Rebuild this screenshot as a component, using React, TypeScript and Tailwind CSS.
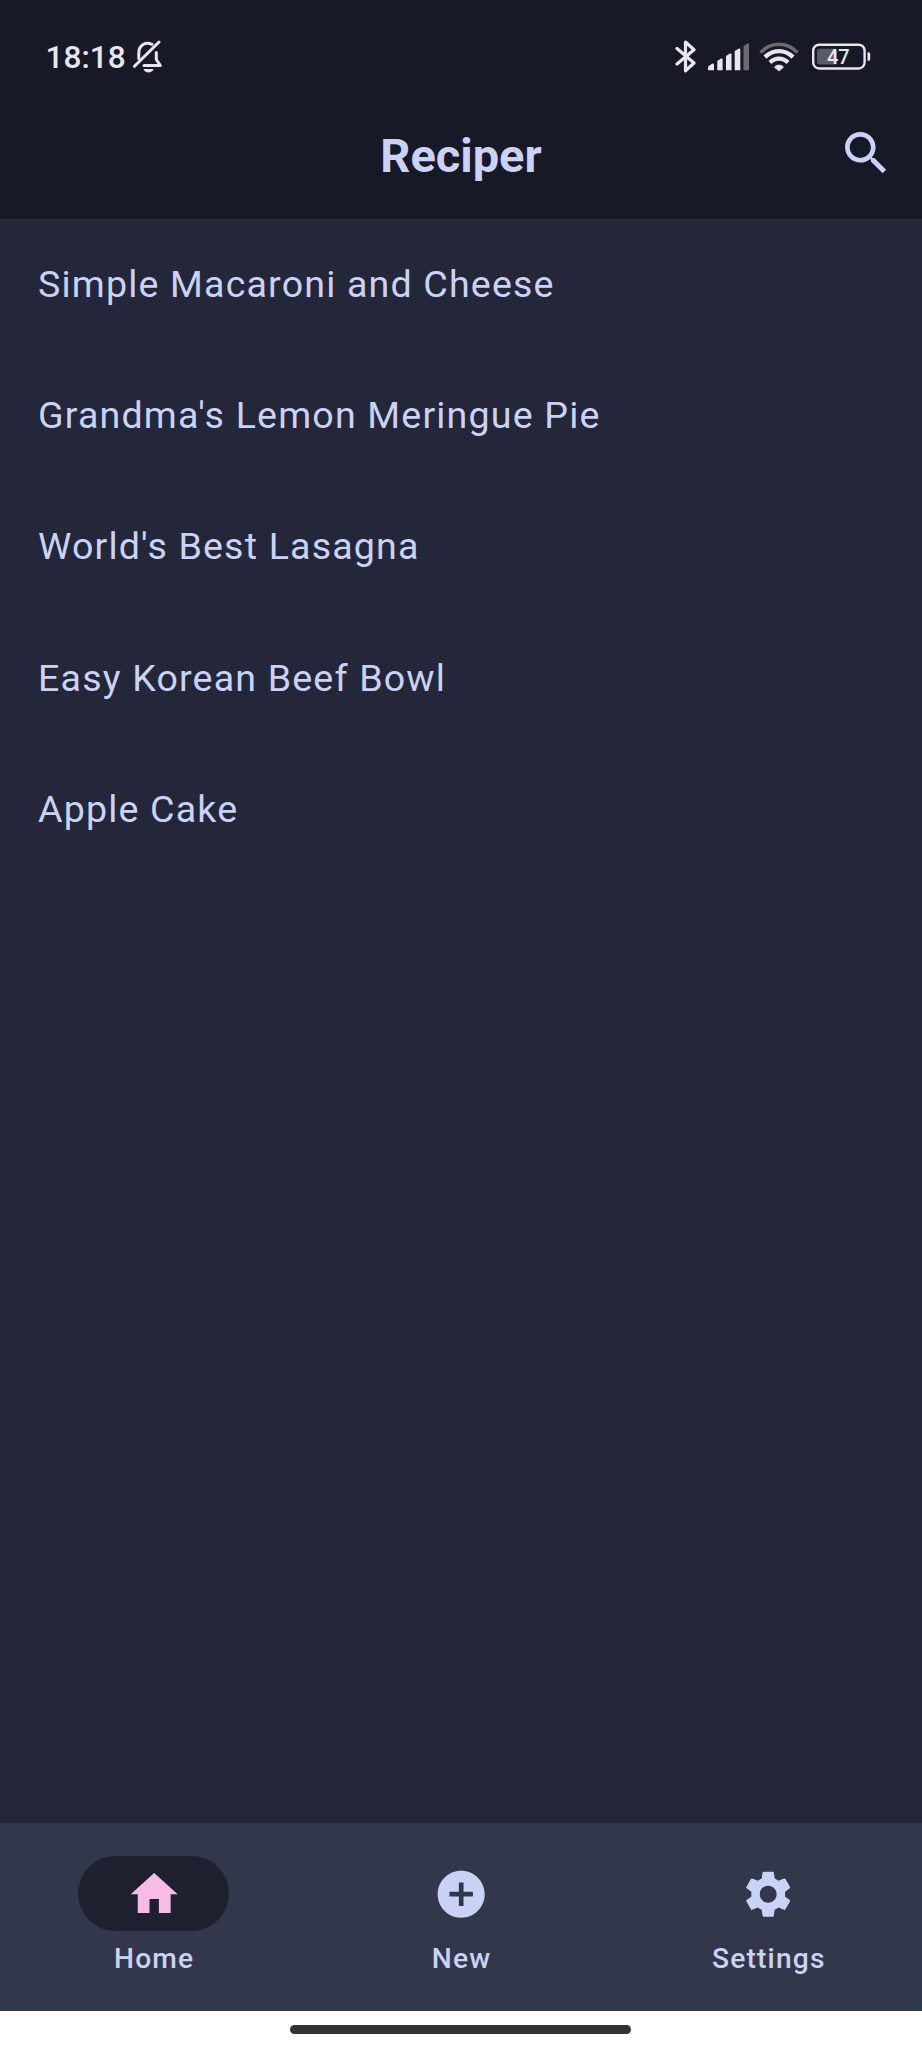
import React from 'react';

const recipes = [
  'Simple Macaroni and Cheese',
  "Grandma's Lemon Meringue Pie",
  "World's Best Lasagna",
  'Easy Korean Beef Bowl',
  'Apple Cake',
];

const iconPaths = {
  search:
    'M15.5 14h-.79l-.28-.27C15.41 12.59 16 11.11 16 9.5 16 5.91 13.09 3 9.5 3S3 5.91 3 9.5 5.91 16 9.5 16c1.61 0 3.09-.59 4.23-1.57l.27.28v.79l5 4.99L20.49 19l-4.99-5zm-6 0C7.01 14 5 11.99 5 9.5S7.01 5 9.5 5 14 7.01 14 9.5 11.99 14 9.5 14z',
  home: 'M10 20v-6h4v6h5v-8h3L12 3 2 12h3v8z',
  add: 'M12 2C6.48 2 2 6.48 2 12s4.48 10 10 10 10-4.48 10-10S17.52 2 12 2zm5 11h-4v4h-2v-4H7v-2h4V7h2v4h4v2z',
  settings:
    'M19.14 12.94c.04-.3.06-.61.06-.94 0-.32-.02-.64-.07-.94l2.03-1.58c.18-.14.23-.41.12-.61l-1.92-3.32c-.12-.22-.37-.29-.59-.22l-2.39.96c-.5-.38-1.03-.7-1.62-.94l-.36-2.54c-.04-.24-.24-.41-.48-.41h-3.84c-.24 0-.43.17-.47.41l-.36 2.54c-.59.24-1.13.57-1.62.94l-2.39-.96c-.22-.08-.47 0-.59.22L2.74 8.87c-.12.21-.08.47.12.61l2.03 1.58c-.05.3-.09.63-.09.94s.02.64.07.94l-2.03 1.58c-.18.14-.23.41-.12.61l1.92 3.32c.12.22.37.29.59.22l2.39-.96c.5.38 1.03.7 1.62.94l.36 2.54c.05.24.24.41.48.41h3.84c.24 0 .44-.17.47-.41l.36-2.54c.59-.24 1.13-.56 1.62-.94l2.39.96c.22.08.47 0 .59-.22l1.92-3.32c.12-.22.07-.47-.12-.61l-2.01-1.58zM12 15.6c-1.98 0-3.6-1.62-3.6-3.6s1.62-3.6 3.6-3.6 3.6 1.62 3.6 3.6-1.62 3.6-3.6 3.6z',
};

function Icon({ name, className = '' }: { name: keyof typeof iconPaths; className?: string }) {
  return (
    <svg viewBox="0 0 24 24" fill="currentColor" className={`size-[56.4px] shrink-0 ${className}`}>
      <path d={iconPaths[name]} />
    </svg>
  );
}

function StatusBar() {
  return (
    <div className="flex h-[112px] items-center justify-between pl-[45.5px] pr-[50px] text-[#e6e7ee]">
      <div className="flex items-center gap-[6px] pt-[4px]">
        <span className="text-[31.6px] font-medium leading-9">18:18</span>
        <svg width="32" height="36" viewBox="0 0 32 36" fill="none" stroke="currentColor" strokeWidth="3" strokeLinecap="round" strokeLinejoin="round">
          <path d="M20 4.3C12 1 6.8 6.5 6.8 13V18.5" />
          <path d="M24.3 12.5V19.5L28.3 25.5H12" />
          <path d="M2.5 26.3 27 2" />
          <path d="M11.5 29H21.5C20.5 33.5 12.5 33.5 11.5 29Z" fill="currentColor" stroke="none" />
        </svg>
      </div>
      <div className="flex items-center pt-[1px]">
        <svg width="24" height="36" viewBox="0 0 24 36" fill="none" stroke="currentColor" strokeWidth="3.2" strokeLinejoin="round" strokeLinecap="round">
          <path d="M2 9.5 19 24 10.5 31.8V3L19 10.8 2 25" />
        </svg>
        <svg className="ml-[9px]" width="42" height="36" viewBox="0 0 42 36" fill="currentColor">
          <path d="M0 31.3V28.5Q0 27 1.5 26.5L4 24.7Q6 24 6 26V31.3Z" />
          <path d="M9.3 31.3V22L13 19.5Q14.6 19 14.6 20.5V31.3Z" />
          <path d="M18 31.3V17L22 14.5Q23.5 14 23.5 15.5V31.3Z" />
          <path d="M26.7 31.3V12L31 9.5Q32.3 9 32.3 10.5V31.3Z" />
          <path d="M35.5 31.3V7L39.5 4.5Q41 4 41 5.5V31.3Z" opacity="0.4" />
        </svg>
        <svg className="ml-[9px]" width="40" height="36" viewBox="0 0 40 36" fill="none" stroke="currentColor" strokeWidth="3.5">
          <path d="M1.5 13.6C12 2.6 28 2.6 38.5 13.6" opacity="0.4" />
          <path d="M6 18.1C14 10.1 26 10.1 34 18.1" strokeWidth="4.4" />
          <path d="M11 23.6C16.2 18.4 23.8 18.4 29 23.6" strokeWidth="4.2" />
          <path d="M15.5 28.2C17.5 25.4 22.5 25.4 24.5 28.2L20 32Z" fill="currentColor" strokeWidth="0.8" strokeLinejoin="round" />
        </svg>
        <svg className="ml-[13px]" width="60" height="36" viewBox="0 0 60 36">
          <rect x="1.2" y="5.7" width="51.4" height="23.8" rx="6" fill="none" stroke="currentColor" strokeWidth="2.4" />
          <rect x="5" y="9.8" width="20" height="15.6" rx="2.5" fill="#5a5b67" />
          <path d="M55.5 13.3h1.2a1.5 1.5 0 0 1 1.5 1.5v5.5a1.5 1.5 0 0 1-1.5 1.5h-1.2Z" fill="currentColor" />
          <text x="26.3" y="25" textAnchor="middle" fill="currentColor" fontSize="20" fontWeight="500">47</text>
        </svg>
      </div>
    </div>
  );
}

function NavItem({ icon, label, active = false }: { icon: keyof typeof iconPaths; label: string; active?: boolean }) {
  return (
    <button className="flex flex-1 flex-col items-center pt-[33px]">
      <span
        className={`flex h-[75px] w-[150.5px] items-center justify-center rounded-full pt-[0.5px] pl-[0.5px] ${
          active ? 'bg-[#1e2030] text-[#f5bde6]' : 'text-[#cad3f5]'
        }`}
      >
        <Icon name={icon} />
      </span>
      <span className="mt-[9.4px] pl-[1px] text-[28.2px] font-medium leading-[38px] tracking-[1.17px]">{label}</span>
    </button>
  );
}

export default function App() {
  return (
    <div className="flex h-[2048px] w-[922px] flex-col overflow-hidden bg-[#24273a] font-[Roboto,sans-serif] text-[#cad3f5]">
      <header className="h-[219px] shrink-0 bg-[#181926]">
        <StatusBar />
        <div className="grid grid-cols-[1fr_auto_1fr] items-center pr-[28px] pl-[28px]">
          <h1 className="col-start-2 text-[47px] font-bold leading-[87px]">Reciper</h1>
          <button className="-mt-[4px] justify-self-end">
            <Icon name="search" />
          </button>
        </div>
      </header>
      <ul className="-mt-[1px] flex-1">
        {recipes.map((name) => (
          <li key={name} className="flex h-[131.4px] items-center px-[38px] text-[37.6px] tracking-[1.17px]">
            {name}
          </li>
        ))}
      </ul>
      <nav className="flex h-[187.5px] shrink-0 bg-[#33374b]">
        <NavItem icon="home" label="Home" active />
        <NavItem icon="add" label="New" />
        <NavItem icon="settings" label="Settings" />
      </nav>
      <div className="flex h-[37.5px] shrink-0 justify-center bg-white pr-[1px] pt-[14.5px]">
        <div className="h-[9px] w-[341px] rounded-full bg-[#333333]" />
      </div>
    </div>
  );
}
